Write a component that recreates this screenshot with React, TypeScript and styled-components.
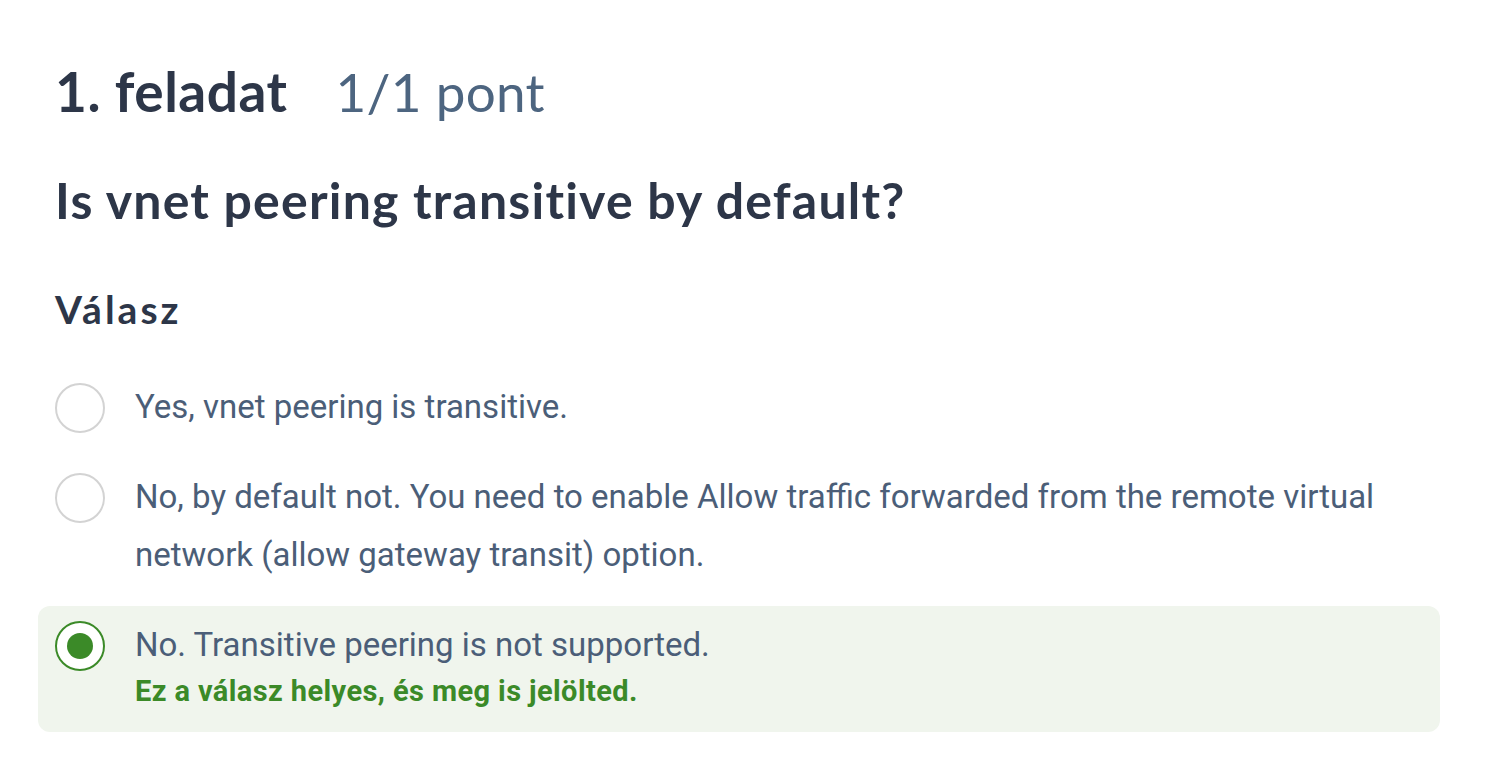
import React from "react";
import styled, { createGlobalStyle } from "styled-components";

const Global = createGlobalStyle`
  html, body { margin: 0; padding: 0; background: #ffffff; }
  body { font-family: Roboto, "Liberation Sans", sans-serif; }
`;

const Page = styled.main`
  padding: 58px 52px 0 55px;
  width: 1492px;
  box-sizing: border-box;
`;

const TitleRow = styled.h1`
  display: flex;
  align-items: baseline;
  gap: 48px;
  margin: 0;
  font-family: Lato, "DejaVu Sans", sans-serif;
  font-weight: 700;
  font-size: 55px;
  line-height: 66px;
  letter-spacing: 0.5px;
  color: #2d3648;
`;

const Score = styled.span`
  font-weight: 400;
  font-size: 53px;
  letter-spacing: 0.3px;
  color: #4d6580;
`;

const Question = styled.h2`
  margin: 45px 0 0;
  font-family: Lato, "DejaVu Sans", sans-serif;
  font-weight: 700;
  font-size: 50px;
  line-height: 60px;
  letter-spacing: 1.2px;
  color: #2d3648;
`;

const SectionLabel = styled.h3`
  margin: 56px 0 0;
  font-family: Lato, "DejaVu Sans", sans-serif;
  font-weight: 700;
  font-size: 39px;
  line-height: 47px;
  letter-spacing: 3px;
  color: #2d3648;
`;

const Options = styled.div`
  display: flex;
  flex-direction: column;
  gap: 12px;
  margin: 35px 0 0 -17px;
`;

const Option = styled.label<{ $correct?: boolean }>`
  display: flex;
  align-items: flex-start;
  gap: 30px;
  padding: ${(p) => (p.$correct ? "10px 17px 24px" : "10px 17px")};
  border-radius: 12px;
  background: ${(p) => (p.$correct ? "#f0f5ed" : "transparent")};
`;

const Radio = styled.span<{ $checked?: boolean }>`
  flex: none;
  width: 50px;
  height: 50px;
  margin-top: 5px;
  border-radius: 50%;
  box-sizing: border-box;
  border: 2px solid ${(p) => (p.$checked ? "#3b8a28" : "#d3d3d3")};
  background: #fff;
  display: flex;
  align-items: center;
  justify-content: center;
  &::after {
    content: "";
    display: ${(p) => (p.$checked ? "block" : "none")};
    width: 26px;
    height: 26px;
    border-radius: 50%;
    background: #3b8a28;
  }
`;

const OptionBody = styled.div`
  display: flex;
  flex-direction: column;
`;

const OptionText = styled.span`
  font-family: Roboto, "Liberation Sans", sans-serif;
  font-size: 33px;
  line-height: 58px;
  color: #4b5e78;
`;

const Feedback = styled.span`
  font-family: Roboto, "Liberation Sans", sans-serif;
  font-weight: 700;
  font-size: 29px;
  line-height: 34px;
  letter-spacing: 0.4px;
  color: #3b8a28;
`;

export default function App() {
  return (
    <>
      <Global />
      <Page>
        <TitleRow>
          <span>1. feladat</span>
          <Score>1/1 pont</Score>
        </TitleRow>
        <Question>Is vnet peering transitive by default?</Question>
        <SectionLabel>Válasz</SectionLabel>
        <Options>
          <Option>
            <Radio />
            <OptionBody>
              <OptionText>Yes, vnet peering is transitive.</OptionText>
            </OptionBody>
          </Option>
          <Option>
            <Radio />
            <OptionBody>
              <OptionText>
                No, by default not. You need to enable Allow traffic forwarded from the remote virtual
                network (allow gateway transit) option.
              </OptionText>
            </OptionBody>
          </Option>
          <Option $correct>
            <Radio $checked />
            <OptionBody>
              <OptionText>No. Transitive peering is not supported.</OptionText>
              <Feedback>Ez a válasz helyes, és meg is jelölted.</Feedback>
            </OptionBody>
          </Option>
        </Options>
      </Page>
    </>
  );
}
